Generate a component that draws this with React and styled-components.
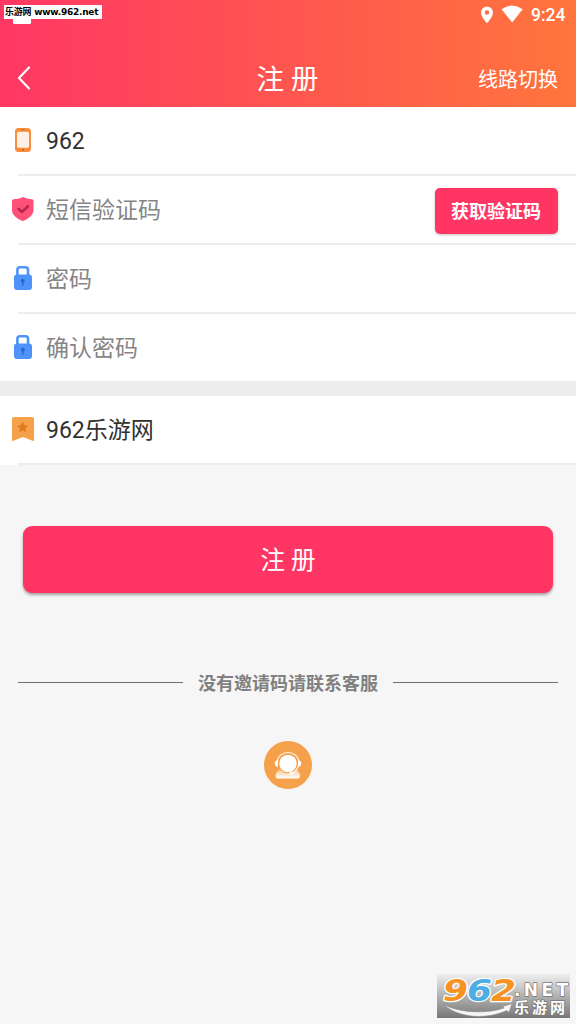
import { useState } from "react";
import styled, { createGlobalStyle } from "styled-components";

const Colors = {
    pink: '#ff3663',
    text: '#303030',
    placeholder: '#858585',
    line: '#ededed',
    page: '#f6f6f6',
    orange: '#f5a04a',
}

const GlobalStyle = createGlobalStyle`
    * {
        box-sizing: border-box;
    }

    body {
        margin: 0;
        background: ${Colors.page};
        font-family: Roboto, "Noto Sans CJK SC", sans-serif;
    }

    button, input {
        font-family: inherit;
    }
`

const Page = styled.div`
    position: relative;
    height: 1024px;
    overflow: hidden;
    background: ${Colors.page};
`

const Header = styled.header`
    height: 107px;
    background: linear-gradient(90deg, #ff3764 0%, #ff753c 100%);
    color: #fff;
`

const StatusBar = styled.div`
    height: 29px;
    display: flex;
    align-items: center;
    justify-content: flex-end;
    padding-right: 10px;

    svg {
        display: block;
    }
`

const Clock = styled.span`
    width: 35px;
    margin-left: 5px;
    padding-top: 2px;
    font-size: 17.5px;
    font-weight: 500;
    line-height: 29px;
    white-space: nowrap;
`

const NavBar = styled.nav`
    height: 78px;
    display: grid;
    grid-template-columns: 1fr auto 1fr;
    align-items: center;
    padding: 0 18px 0 17px;
`

const BackButton = styled.button`
    width: 14px;
    height: 24px;
    margin-bottom: 17px;
    align-self: end;
    padding: 0;
    border: 0;
    background: none;

    svg {
        display: block;
    }
`

const Title = styled.h1`
    margin: 23px 0 0;
    font-size: 27.5px;
    font-weight: 400;
    line-height: 40px;
    white-space: pre;
`

const RouteLink = styled.a`
    justify-self: end;
    margin-top: 23px;
    font-size: 20px;
    line-height: 30px;
`

const FieldRow = styled.label`
    height: ${props => props.$noLine ? 67 : 69}px;
    display: flex;
    align-items: stretch;
`

const FieldIcon = styled.span`
    width: 46px;
    height: 67px;
    display: flex;
    align-items: center;
    padding-left: 11px;
    padding-bottom: 2px;
`

const FieldGroup = styled.div`
    background: #fff;
`

const Line = styled.hr`
    height: 2px;
    margin: -2px 0 0 18px;
    border: 0;
    background: ${Colors.line};
`

const Input = styled.input`
    flex: 1;
    min-width: 0;
    height: 67px;
    padding: ${props => props.$mixed ? '0 0 4px' : '2px 0 0'};
    border: 0;
    outline: 0;
    background: none;
    color: ${Colors.text};
    font-size: 23px;

    &::placeholder {
        color: ${Colors.placeholder};
        opacity: 1;
    }
`

const CodeButton = styled.button`
    width: 123px;
    height: 46px;
    margin: 12px 18px 0 0;
    padding: 0 1px 2px 0;
    border: 0;
    border-radius: 5px;
    background: ${Colors.pink};
    box-shadow: 0 1px 3px rgba(0, 0, 0, 0.25);
    color: #fff;
    font-size: 18px;
    font-weight: 700;
`

const Band = styled.div`
    height: 15px;
    background: ${Colors.line};
`

const SubmitButton = styled.button`
    display: block;
    width: 530px;
    height: 67px;
    margin: 61px auto 0;
    padding: 0 0 2px;
    border: 0;
    border-radius: 9px;
    background: ${Colors.pink};
    box-shadow: 0 2px 3px rgba(0, 0, 0, 0.35);
    color: #fff;
    font-size: 24.5px;
    white-space: pre;
`

const Divider = styled.div`
    display: flex;
    align-items: center;
    gap: 15px;
    margin-top: 76px;
    padding: 0 18px;
    color: #808080;
    font-size: 18px;
    font-weight: 700;
    line-height: 27px;

    &::before, &::after {
        content: '';
        flex: 1;
        height: 1px;
        background: #707070;
    }

    span {
        padding-top: 1px;
        margin-bottom: -1px;
    }
`

const ServiceButton = styled.button`
    display: block;
    width: 48px;
    height: 48px;
    margin: 45px auto 0;
    padding: 0;
    border: 0;
    border-radius: 50%;
    background: ${Colors.orange};

    svg {
        display: block;
    }
`

const SiteTag = styled.div`
    position: absolute;
    top: 5px;
    left: 4px;
    width: 98px;
    height: 14px;
    background: #fff;
    color: #000;
    font-family: "DejaVu Sans", "Noto Sans CJK SC", sans-serif;
    font-size: 9px;
    font-weight: 700;
    line-height: 15px;
    letter-spacing: -0.25px;
    white-space: nowrap;
    padding-left: 1px;
`

const Notification = styled.div`
    position: absolute;
    top: 17px;
    left: 13px;
    width: 18px;
    height: 7px;
    border-radius: 1px;
    background: #fff;
`

const SiteLogo = styled.div`
    position: absolute;
    top: 974px;
    left: 437px;
    width: 133px;
    height: 44px;
    background: linear-gradient(#efefef, #b8b8b8 45%, #777);

    svg {
        display: block;
        overflow: visible;
    }
`

const PhoneIcon = () => (
    <svg width="24" height="26" viewBox="0 0 24 26">
        <rect x="4" y="1" width="16" height="24" rx="3.5" fill="#f98d3c" />
        <rect x="6" y="4.7" width="12" height="16" rx="1.5" fill="#fdf1e7" />
        <rect x="10" y="2.3" width="4" height="1" rx="0.5" fill="#c96a20" />
        <circle cx="12" cy="22.8" r="1.1" fill="#c96a20" />
    </svg>
)

const ShieldIcon = () => (
    <svg width="24" height="26" viewBox="0 0 24 26">
        <path d="M12 1C15 2.5 18.5 3.2 21 3.3Q22.5 3.5 22.5 5V14C22.5 19.5 17 23 11.8 25C6.5 23 1 19.5 1 14V5Q1 3.5 2.5 3.3C5.5 3.2 9 2.5 12 1Z" fill="#ff5178" />
        <path d="M7.5 12.8L11 16L17 10.3" fill="none" stroke="#b92550" strokeWidth="2.6" strokeLinecap="round" strokeLinejoin="round" />
    </svg>
)

const LockIcon = () => (
    <svg width="24" height="26" viewBox="0 0 24 26">
        <path d="M6.4 10V4.8Q6.4 2.3 8.9 2.3H14.5Q17 2.3 17 4.8V10" fill="none" stroke="#4d93fa" strokeWidth="2.6" />
        <rect x="3" y="9.5" width="18" height="15.5" rx="3" fill="#4d93fa" />
        <circle cx="11.8" cy="15.7" r="2" fill="#2c68c2" />
        <path d="M11.8 16V20.8" stroke="#2c68c2" strokeWidth="1.3" />
    </svg>
)

const BookmarkIcon = () => (
    <svg width="24" height="26" viewBox="0 0 24 26">
        <path d="M3 1H21Q23 1 23 3V24Q23 25.5 21.5 24.8L12 21L2.5 24.8Q1 25.5 1 24V3Q1 1 3 1Z" fill="#f5a04a" />
        <path d="M11.7 5.5L13.4 9.2L17.4 9.6L14.4 12.3L15.3 16.3L11.7 14.2L8.1 16.3L9 12.3L6 9.6L10 9.2Z" fill="#de7c1b" />
    </svg>
)

const HeadsetIcon = () => (
    <svg width="48" height="48" viewBox="0 0 48 48">
        <defs>
            <linearGradient id="shoulders" x1="0" y1="0" x2="0" y2="1">
                <stop offset="0" stopColor="#f8bd80" />
                <stop offset="1" stopColor="#fff" />
            </linearGradient>
        </defs>
        <path d="M17 27H31C34 29 36 32 36 35Q36 37.5 33.5 37.5H14Q11.5 37.5 11.5 35C11.5 32 14 29 17 27Z" fill="url(#shoulders)" />
        <circle cx="24" cy="22.5" r="9.8" fill="#f5a04a" />
        <circle cx="24" cy="22.5" r="8.7" fill="#fff" />
        <path d="M13.2 22C13.2 8 34.8 8 34.8 22C34.8 27 32.5 30 27.5 32.5" fill="none" stroke="#fff" strokeWidth="1.1" />
        <path d="M13.8 19Q10.5 20 10.8 23Q11 25.5 13.8 26ZM34.2 19Q37.5 20 37.2 23Q37 25.5 34.2 26Z" fill="#fff" />
        <ellipse cx="27.5" cy="32.3" rx="2" ry="1.4" fill="#fff" />
    </svg>
)

const LogoDrawing = () => (
    <svg width="133" height="44" viewBox="0 0 133 44">
        <g fontFamily="DejaVu Sans, sans-serif" fontStyle="italic" fontWeight="700" fontSize="31" stroke="#fff" strokeWidth="2.5" strokeLinejoin="round" paintOrder="stroke">
            <text x="6" y="27" textLength="25" lengthAdjust="spacingAndGlyphs" fill="#f79322">9</text>
            <text x="30" y="27" textLength="25" lengthAdjust="spacingAndGlyphs" fill="#4daee5">6</text>
            <text x="54" y="27" textLength="25" lengthAdjust="spacingAndGlyphs" fill="#f79322">2</text>
        </g>
        <path d="M7 31C25 39 49 40 67 34L65.5 32.5L75 29.5L72 38.5L70 36.500C49 46 22 44 7 31Z" fill="#f6f6f6" stroke="#858585" strokeWidth="0.6" />
        <g fill="#fff" stroke="#777" strokeWidth="1.4" strokeLinejoin="round" paintOrder="stroke" fontWeight="700">
            <text x="77" y="21.500" fontFamily="DejaVu Sans, sans-serif" fontSize="17" textLength="54" lengthAdjust="spacing">.NET</text>
            <text x="77" y="39" fontFamily="Noto Sans CJK SC, sans-serif" fontSize="15" textLength="51" lengthAdjust="spacing">乐游网</text>
        </g>
    </svg>
)

const Field = ({ icon, value: valueDefault = '', placeholder, type = 'text', noLine, mixed, children }) => {
    const [value, setValue] = useState(valueDefault);

    return (
        <>
            <FieldRow $noLine={noLine}>
                <FieldIcon>{icon}</FieldIcon>
                <Input
                    $mixed={mixed}
                    type={type}
                    value={value}
                    placeholder={placeholder}
                    onChange={e => setValue(e.target.value)} />
                {children}
            </FieldRow>
            {!noLine && <Line />}
        </>
    )
}

const App = () => {
    return (
        <Page>
            <GlobalStyle />
            <Header>
                <StatusBar>
                    <svg width="50" height="29" viewBox="0 0 50 29">
                        <path fillRule="evenodd" d="M11 6.5A6 6 0 0 0 5 12.5C5 17 11 23.3 11 23.3S17 17 17 12.5A6 6 0 0 0 11 6.5ZM11 10.3A2.2 2.2 0 1 1 11 14.7A2.2 2.2 0 1 1 11 10.3Z" fill="#fff" />
                        <path d="M25.5 9.2Q36 1.8 46.7 9.2L36.1 22.5Z" fill="#fff" />
                    </svg>
                    <Clock>9:24</Clock>
                </StatusBar>
                <NavBar>
                    <BackButton aria-label="返回">
                        <svg width="14" height="24" viewBox="0 0 14 24">
                            <path d="M12 1.5L2 12L12 22.5" fill="none" stroke="#fff" strokeWidth="2.2" strokeLinecap="round" strokeLinejoin="round" />
                        </svg>
                    </BackButton>
                    <Title>注 册</Title>
                    <RouteLink>线路切换</RouteLink>
                </NavBar>
            </Header>
            <FieldGroup>
                <Field icon={<PhoneIcon />} value="962" />
                <Field icon={<ShieldIcon />} placeholder="短信验证码">
                    <CodeButton type="button">获取验证码</CodeButton>
                </Field>
                <Field icon={<LockIcon />} placeholder="密码" type="password" />
                <Field icon={<LockIcon />} placeholder="确认密码" type="password" noLine />
            </FieldGroup>
            <Band />
            <FieldGroup>
                <Field icon={<BookmarkIcon />} value="962乐游网" mixed />
            </FieldGroup>
            <SubmitButton>注 册</SubmitButton>
            <Divider><span>没有邀请码请联系客服</span></Divider>
            <ServiceButton aria-label="客服">
                <HeadsetIcon />
            </ServiceButton>
            <Notification />
            <SiteTag>乐游网 www.962.net</SiteTag>
            <SiteLogo>
                <LogoDrawing />
            </SiteLogo>
        </Page>
    )
}

export default App;
